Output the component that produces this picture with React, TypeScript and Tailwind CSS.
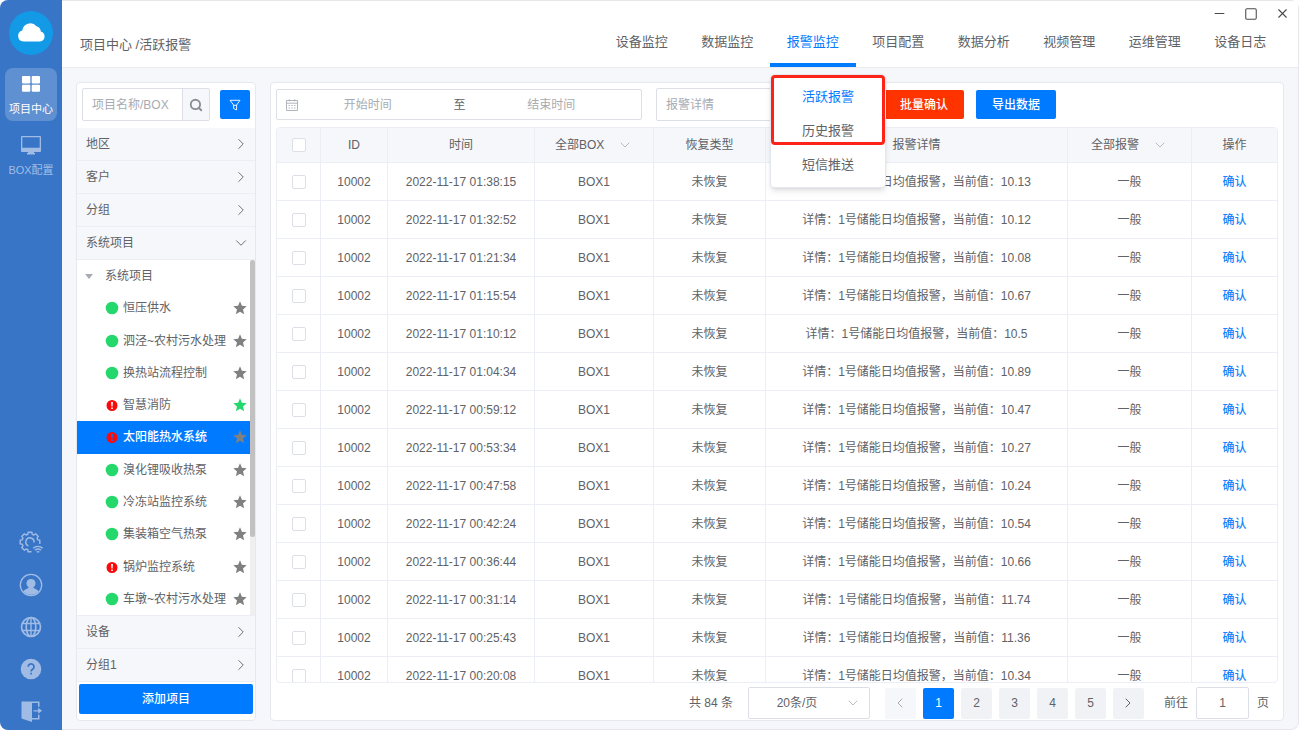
import { useState } from "react";
import type { ReactNode } from "react";
import { ChevronDown, ChevronLeft, ChevronRight, Minus, Search, Square, X } from "lucide-react";
import clsx from "clsx";

type TreeItem = { name: string; alarm?: boolean; starred?: boolean };

const NAV = ["设备监控", "数据监控", "报警监控", "项目配置", "数据分析", "视频管理", "运维管理", "设备日志"];
const ALARM_MENU = ["活跃报警", "历史报警", "短信推送"];

const PROJECTS: TreeItem[] = [
  { name: "恒压供水" },
  { name: "泗泾~农村污水处理" },
  { name: "换热站流程控制" },
  { name: "智慧消防", alarm: true, starred: true },
  { name: "太阳能热水系统", alarm: true },
  { name: "溴化锂吸收热泵" },
  { name: "冷冻站监控系统" },
  { name: "集装箱空气热泵" },
  { name: "锅炉监控系统", alarm: true },
  { name: "车墩~农村污水处理" },
];

const ALARMS = [
  { time: "2022-11-17 01:38:15", value: "10.13" },
  { time: "2022-11-17 01:32:52", value: "10.12" },
  { time: "2022-11-17 01:21:34", value: "10.08" },
  { time: "2022-11-17 01:15:54", value: "10.67" },
  { time: "2022-11-17 01:10:12", value: "10.5" },
  { time: "2022-11-17 01:04:34", value: "10.89" },
  { time: "2022-11-17 00:59:12", value: "10.47" },
  { time: "2022-11-17 00:53:34", value: "10.27" },
  { time: "2022-11-17 00:47:58", value: "10.24" },
  { time: "2022-11-17 00:42:24", value: "10.54" },
  { time: "2022-11-17 00:36:44", value: "10.66" },
  { time: "2022-11-17 00:31:14", value: "11.74" },
  { time: "2022-11-17 00:25:43", value: "11.36" },
  { time: "2022-11-17 00:20:08", value: "10.34" },
];

export default function App() {
  return (
    <div className="flex h-screen overflow-hidden rounded-lg bg-[#f6f7fa] font-['Liberation_Sans','Noto_Sans_CJK_SC',sans-serif] text-xs text-[#606266]">
      <Rail />
      <div className="flex min-w-0 flex-1 flex-col rounded-r-lg border-t border-r border-b border-[#e6e7ea]">
        <Header />
        <main className="flex min-h-0 flex-1 gap-3.5 pt-3.5 pr-3.5 pb-2 pl-3.5">
          <ProjectPanel />
          <AlarmPanel />
        </main>
      </div>
    </div>
  );
}

/* Blue icon rail */
function Rail() {
  return (
    <nav className="flex w-[62px] shrink-0 flex-col items-center bg-[#3875c6] pt-[11px] pb-[7px] text-[11px] text-[#a0bce5]">
      <svg viewBox="0 0 44 44" className="h-11 w-11">
        <circle cx="22" cy="22" r="22" fill="#129ae6" />
        <path
          d="M14.5 30.5a5.6 5.6 0 0 1-1.2-11 8 8 0 0 1 14.2-4.2 6 6 0 0 1 4.300 5.200 5.100 5.100 0 0 1-.8 10z"
          fill="#fff"
        />
      </svg>
      <a
        href="#projects"
        className="mt-[13px] flex h-[53px] w-[52px] flex-col items-center rounded-lg bg-white/20 pt-[7px] text-white"
      >
        <svg viewBox="0 0 18 18" className="h-[18px] w-[18px]" fill="currentColor">
          <rect x="0" y="1" width="8.300" height="7.400" rx="1" />
          <rect x="9.700" y="1" width="8.300" height="7.400" rx="1" />
          <rect x="0" y="9.800" width="8.300" height="7" rx="1" />
          <rect x="9.700" y="9.800" width="8.300" height="7" rx="1" />
        </svg>
        <span className="mt-1.5 leading-5">项目中心</span>
      </a>
      <a href="#boxes" className="mt-3.5 flex flex-col items-center">
        <svg viewBox="0 0 22 20" className="h-5 w-[22px]" fill="currentColor">
          <path
            fillRule="evenodd"
            d="M2 1h18a1 1 0 0 1 1 1v14a1 1 0 0 1-1 1h-6v1h1v1.400H7V18h1v-1H2a1 1 0 0 1-1-1V2a1 1 0 0 1 1-1zm.3 1.300v10.400h17.400V2.300z"
          />
        </svg>
        <span className="mt-[5px] leading-5">BOX配置</span>
      </a>

      <div className="mt-auto flex flex-col items-center gap-[18px]">
        <button aria-label="系统设置">
          <svg viewBox="0 0 24 24" className="h-6 w-6" fill="none" stroke="currentColor" strokeWidth="1.4">
            <path
              d="M20.800 12.900V9.100L18.700 8.800 18 7.100l1.300-1.700-2.700-2.700L14.900 4l-1.700-.7-.3-2.100H9.100l-.3 2.100L7.100 4 5.400 2.700 2.700 5.400 4 7.100l-.7 1.700-2.100.3v3.800l2.100.3.7 1.700-1.300 1.700 2.700 2.700L7.100 18l1.700.7.3 2.100h3.400"
              strokeLinejoin="round"
            />
            <path d="M9.500 14.800a4.100 4.100 0 1 1 5.500-3.300M14.200 17.200a7 7 0 0 1 9.400 0M16 19.300a4.600 4.600 0 0 1 6 0M17.700 21.200a2 2 0 0 1 2.600 0" />
          </svg>
        </button>
        <button aria-label="用户">
          <svg viewBox="0 0 24 24" className="h-6 w-6">
            <circle cx="12" cy="12" r="10.700" fill="none" stroke="currentColor" strokeWidth="1.300" />
            <path
              d="M12 6a4.400 4.400 0 0 1 2.300 8.200c.2 1.500 4 1.800 5.400 4a10 10 0 0 1-15.400 0c1.400-2.200 5.200-2.500 5.400-4A4.400 4.400 0 0 1 12 6z"
              fill="currentColor"
            />
          </svg>
        </button>
        <button aria-label="语言">
          <svg viewBox="0 0 24 24" className="h-6 w-6" fill="none" stroke="currentColor" strokeWidth="1.700">
            <circle cx="12" cy="12" r="9.500" />
            <ellipse cx="12" cy="12" rx="4.800" ry="9.500" />
            <path d="M12 2.500v19M3.300 8.500h17.400M3.300 15.500h17.400" strokeWidth="1.400" />
          </svg>
        </button>
        <button aria-label="帮助">
          <svg viewBox="0 0 24 24" className="h-6 w-6">
            <circle cx="12" cy="12" r="10.300" fill="currentColor" />
            <path
              d="M9.200 9.800a2.900 2.900 0 1 1 4.500 2.400c-1.100.7-1.600 1.100-1.600 2.200M12.100 15.700v1.700"
              fill="none"
              stroke="#3875c6"
              strokeWidth="1.700"
            />
          </svg>
        </button>
        <button aria-label="退出">
          <svg viewBox="0 0 24 24" className="h-6 w-6" fill="currentColor">
            <path d="M2.500 2.500h18v5.300h-1.500V4h-6v15h6v-3.200h1.500v4.700h-7.500V23L2.500 19.500z" />
            <path d="M14.500 11.200h4.700V8.800l3.800 3-3.800 3v-2.300h-4.700z" />
          </svg>
        </button>
      </div>
    </nav>
  );
}

function Header() {
  const [active, setActive] = useState("报警监控");
  return (
    <header className="shrink-0 border-b border-[#e9ebf0] bg-white text-[13px]">
      <div className="flex h-[25px] items-center justify-end gap-[17px] pr-2 text-[#4a4a4a]">
        <button aria-label="最小化"><Minus size={15} strokeWidth={1.8} /></button>
        <button aria-label="最大化"><Square size={14} strokeWidth={1.8} /></button>
        <button aria-label="关闭"><X size={15} strokeWidth={1.8} /></button>
      </div>
      <div className="flex h-[41px] justify-between">
        <div className="flex items-center pb-1 pl-[18px]">项目中心 /活跃报警</div>
        <nav className="mr-[15px] grid w-[684px] grid-cols-8">
          {NAV.map((label) => (
            <div key={label} className="relative">
              <button
                onClick={() => setActive(label)}
                className={clsx(
                  "h-full w-full border-b-4 pb-1.5 leading-5",
                  active === label ? "border-[#007aff] text-[#007aff]" : "border-transparent",
                )}
              >
                {label}
              </button>
              {label === "报警监控" && <AlarmMenu />}
            </div>
          ))}
        </nav>
      </div>
    </header>
  );
}

function AlarmMenu() {
  return (
    <div className="absolute top-full left-0 z-10 mt-[7px] w-[116px] rounded border border-[#e4e7ed] bg-white py-[5px] shadow-md">
      <ul>
        {ALARM_MENU.map((label, i) => (
          <li key={label}>
            <a
              href="#alarms"
              className={clsx("block text-center leading-[34px]", i === 0 && "text-[#007aff]")}
            >
              {label}
            </a>
          </li>
        ))}
      </ul>
      <div className="pointer-events-none absolute inset-x-0 top-0 h-[70px] rounded border-3 border-[#fc2419]" />
    </div>
  );
}

function GroupRow({ label, open }: { label: string; open?: boolean }) {
  const Icon = open ? ChevronDown : ChevronRight;
  return (
    <button className="flex h-[33px] w-full shrink-0 items-center justify-between border-b border-[#ebeef5] bg-[#f5f7fa] pr-[5px] pl-[9px]">
      {label}
      <Icon size={18} strokeWidth={1.200} />
    </button>
  );
}

function ProjectPanel() {
  const [selected, setSelected] = useState("太阳能热水系统");
  return (
    <aside className="flex w-[180px] shrink-0 flex-col rounded border border-[#e6e8ef] bg-white">
      <div className="flex items-center justify-between px-[5px] pt-[5px] pb-[7px]">
        <div className="flex h-[33px] w-32 rounded-xs border border-[#dcdfe6]">
          <input
            aria-label="搜索项目"
            placeholder="项目名称/BOX"
            className="w-0 flex-1 pl-[9px] outline-none placeholder:text-[#a8abb2]"
          />
          <button
            aria-label="搜索"
            className="flex w-[27px] items-center justify-center border-l border-[#dcdfe6] bg-[#f5f7fa] text-[#8a8d93]"
          >
            <Search size={14} strokeWidth={3.200} />
          </button>
        </div>
        <button
          aria-label="筛选"
          className="flex h-[29px] w-[30px] items-center justify-center rounded-xs bg-[#007aff] text-white"
        >
          <svg viewBox="0 0 12 12" className="h-3 w-3" fill="none" stroke="currentColor" strokeWidth="0.900">
            <path d="M1 1.300h10L7.600 6v5L4.600 9.500V6zM4.600 6.300h3" strokeLinejoin="round" />
          </svg>
        </button>
      </div>

      <GroupRow label="地区" />
      <GroupRow label="客户" />
      <GroupRow label="分组" />
      <GroupRow label="系统项目" open />

      <div className="flex min-h-0 flex-1 border-b border-[#ebeef5]">
        <ul className="grid min-w-0 flex-1 auto-rows-fr">
          <li className="flex items-center pl-2">
            <svg viewBox="0 0 8 5" className="mr-3 h-[5px] w-2" fill="#a8abb2">
              <path d="M0 0h8L4 5z" />
            </svg>
            系统项目
          </li>
          {PROJECTS.map((item) => {
            const isSelected = item.name === selected;
            return (
              <li
                key={item.name}
                onClick={() => setSelected(item.name)}
                className={clsx(
                  "flex items-center pr-0.5 pl-7",
                  isSelected && "bg-[#007aff] font-medium text-white",
                )}
              >
                <StatusDot alarm={item.alarm} />
                <span className="ml-1 flex-1 whitespace-nowrap">{item.name}</span>
                <svg
                  viewBox="0 0 24 24"
                  className="h-4 w-4 shrink-0"
                  fill={item.starred ? "#25d86c" : "#808080"}
                >
                  <path d="M12 17.700L18.200 21.500l-1.700-7.300L22 9.400l-7.200-.7L12 2 9.200 8.700 2 9.400l5.500 4.800L5.800 21.500z" />
                </svg>
              </li>
            );
          })}
        </ul>
        <div className="w-[5px] bg-[#efefef]">
          <div className="h-[78%] rounded-full bg-[#c1c1c1]" />
        </div>
      </div>

      <GroupRow label="设备" />
      <GroupRow label="分组1" />
      <button className="mx-0.5 mt-0.5 mb-1.5 h-[30px] shrink-0 rounded-xs bg-[#007aff] font-medium text-white">
        添加项目
      </button>
    </aside>
  );
}

function StatusDot({ alarm }: { alarm?: boolean }) {
  return (
    <svg viewBox="0 0 14 14" className="h-3.5 w-3.5 shrink-0">
      {alarm ? (
        <path
          fill="#fa0a0a"
          fillRule="evenodd"
          d="M7 2a5.500 5.500 0 1 1 0 11 5.500 5.500 0 0 1 0-11zm-.9 2l.3 4.500h1.200L7.900 4zM6.200 9.500v1.400h1.600V9.500z"
        />
      ) : (
        <circle cx="7" cy="7" r="6.300" fill="#25d86c" />
      )}
    </svg>
  );
}

function AlarmPanel() {
  return (
    <section className="flex min-w-0 flex-1 flex-col rounded border border-[#e6e8ef] bg-white px-[5px]">
      <div className="flex shrink-0 items-center pt-[5px] pb-1.5">
        <div className="flex h-[31px] w-[366px] items-center rounded-xs border border-[#dcdfe6] pr-5 pl-[9px]">
          <CalendarIcon />
          <input
            aria-label="开始时间"
            placeholder="开始时间"
            className="w-0 flex-1 text-center outline-none placeholder:text-[#a8abb2]"
          />
          <span className="px-4">至</span>
          <input
            aria-label="结束时间"
            placeholder="结束时间"
            className="w-0 flex-1 text-center outline-none placeholder:text-[#a8abb2]"
          />
        </div>
        <input
          aria-label="报警详情"
          placeholder="报警详情"
          className="ml-3.5 h-[33px] w-[216px] rounded-xs border border-[#dcdfe6] px-[9px] outline-none placeholder:text-[#a8abb2]"
        />
        <button className="ml-3 h-[29px] w-20 rounded-xs bg-[#ff3300] font-medium text-white">批量确认</button>
        <button className="ml-3 h-[29px] w-20 rounded-xs bg-[#007aff] font-medium text-white">导出数据</button>
      </div>
      <div className="min-h-0 flex-1 overflow-hidden rounded border border-[#ebeef5]">
        <AlarmTable />
      </div>
      <Pagination />
    </section>
  );
}

function CalendarIcon() {
  return (
    <svg viewBox="0 0 12 12" className="h-3 w-3 shrink-0" fill="none" stroke="#a8abb2" strokeWidth="0.900">
      <path d="M.5 1.500h11v10H.5zM.5 4.200h11M3.300.3v2M8.700.3v2" />
      <path d="M2.500 6.500h7M2.500 9h7" strokeDasharray="1.400" />
    </svg>
  );
}

function Checkbox({ label }: { label: string }) {
  return (
    <input
      type="checkbox"
      aria-label={label}
      className="mx-auto block h-3.5 w-3.5 appearance-none rounded-xs border border-[#dcdfe6] bg-white checked:bg-[#007aff]"
    />
  );
}

function HeadSelect({ label, children }: { label: string; children: ReactNode }) {
  return (
    <div className="flex items-center justify-center gap-3">
      <select aria-label={label} className="appearance-none outline-none">
        {children}
      </select>
      <ChevronDown size={16} strokeWidth={1.200} className="text-[#a8abb2]" />
    </div>
  );
}

function AlarmTable() {
  return (
    <table className="w-full table-fixed border-separate border-spacing-0 text-center">
      <colgroup>
        <col className="w-11" />
        <col className="w-[67px]" />
        <col className="w-[147px]" />
        <col className="w-[119px]" />
        <col className="w-28" />
        <col />
        <col className="w-[124px]" />
        <col className="w-[85px]" />
      </colgroup>
      <thead className="bg-[#f5f7fa] [&_th]:h-[35px] [&_th]:border-r [&_th]:border-b [&_th]:border-[#ebeef5] [&_th]:p-0 [&_th]:font-normal [&_th:last-child]:border-r-0">
        <tr>
          <th><Checkbox label="全选" /></th>
          <th>ID</th>
          <th>时间</th>
          <th>
            <HeadSelect label="BOX筛选">
              <option>全部BOX</option>
              <option>BOX1</option>
            </HeadSelect>
          </th>
          <th>恢复类型</th>
          <th>报警详情</th>
          <th>
            <HeadSelect label="报警筛选">
              <option>全部报警</option>
              <option>一般</option>
            </HeadSelect>
          </th>
          <th>操作</th>
        </tr>
      </thead>
      <tbody className="[&_td]:h-[38px] [&_td]:border-r [&_td]:border-b [&_td]:border-[#ebeef5] [&_td]:p-0 [&_td:last-child]:border-r-0">
        {ALARMS.map(({ time, value }) => (
          <tr key={time}>
            <td><Checkbox label={time} /></td>
            <td>10002</td>
            <td>{time}</td>
            <td>BOX1</td>
            <td>未恢复</td>
            <td>详情：1号储能日均值报警，当前值：{value}</td>
            <td>一般</td>
            <td><button className="font-medium text-[#1485ff]">确认</button></td>
          </tr>
        ))}
      </tbody>
    </table>
  );
}

function Pagination() {
  const [page, setPage] = useState(1);
  return (
    <div className="flex shrink-0 items-center justify-end pt-1 pr-[9px] pb-px">
      <span>共 84 条</span>
      <label className="ml-[15px] flex h-8 w-[122px] items-center rounded-xs border border-[#dcdfe6] pr-2">
        <select aria-label="每页条数" className="w-0 flex-1 appearance-none text-center outline-none">
          <option>20条/页</option>
          <option>50条/页</option>
        </select>
        <ChevronDown size={16} strokeWidth={1.200} className="text-[#a8abb2]" />
      </label>
      <div className="ml-[15px] flex gap-[7px] [&>button]:flex [&>button]:h-[31px] [&>button]:w-[31px] [&>button]:items-center [&>button]:justify-center [&>button]:rounded-xs">
        <button aria-label="上一页" disabled className="bg-[#f5f7fa] text-[#a8abb2]">
          <ChevronLeft size={16} strokeWidth={1.500} />
        </button>
        {[1, 2, 3, 4, 5].map((n) => (
          <button
            key={n}
            onClick={() => setPage(n)}
            className={n === page ? "bg-[#007aff] font-medium text-white" : "bg-[#f0f2f5]"}
          >
            {n}
          </button>
        ))}
        <button aria-label="下一页" className="bg-[#f0f2f5]">
          <ChevronRight size={16} strokeWidth={1.500} />
        </button>
      </div>
      <label className="ml-5 flex items-center gap-2">
        前往
        <input
          defaultValue="1"
          className="h-8 w-[53px] rounded-xs border border-[#dcdfe6] text-center outline-none"
        />
        页
      </label>
    </div>
  );
}
